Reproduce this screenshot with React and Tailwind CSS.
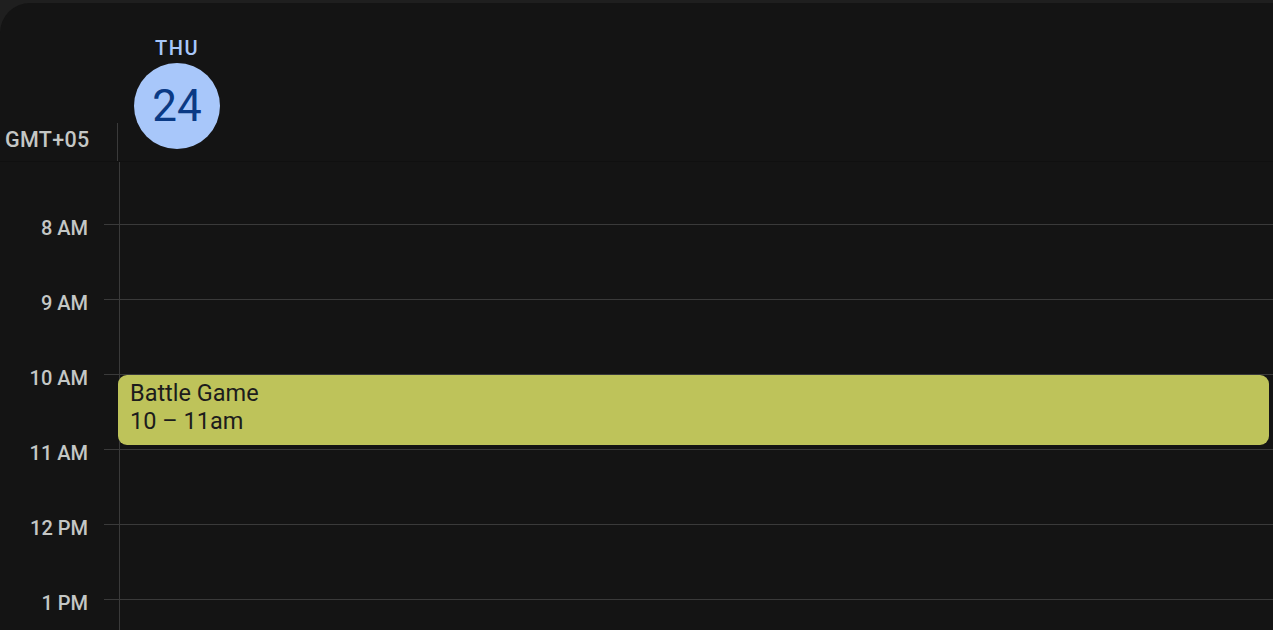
import React from 'react';

const hours = ['8 AM', '9 AM', '10 AM', '11 AM', '12 PM', '1 PM'];

function HourRow({ label, children }) {
  return (
    <div className="flex h-[75px] shrink-0">
      <div className="w-[104px] shrink-0 pr-4 text-right">
        <span className="block -mt-[10px] text-[20px] leading-[28px] font-medium text-[#c4c7c5]">{label}</span>
      </div>
      <div className="w-[15px] shrink-0 border-t border-[#3a3a3a]" />
      <div className="relative flex-1 border-t border-l border-[#3a3a3a]">{children}</div>
    </div>
  );
}

export default function App() {
  return (
    <div className="h-[630px] w-full overflow-hidden bg-[#1f1f1f] pt-[3px]" style={{ fontFamily: 'Roboto, "Noto Sans", sans-serif' }}>
      <div className="flex h-full flex-col rounded-tl-[30px] bg-[#141414]">
        {/* header */}
        <div className="flex h-[159px] shrink-0 border-b border-[#101010]">
          <div className="flex w-[117px] shrink-0 items-end">
            <span className="mb-[7px] pl-[5px] text-[21.5px] leading-[28px] font-medium tracking-[0.3px] text-[#c4c7c5]">GMT+05</span>
          </div>
          <div className="flex flex-1 items-end">
            <div className="h-[38px] w-px bg-[#3a3a3a]" />
            <div className="ml-4 flex w-[86px] flex-col items-center self-start pt-[32px]">
              <span className="text-[20px] leading-[26px] font-medium tracking-[1.5px] text-[#a8c7fa]">THU</span>
              <div className="mt-[2px] flex h-[86px] w-[86px] items-center justify-center rounded-full bg-[#a8c7fa]">
                <span className="text-[44px] leading-none text-[#0a3a85]">24</span>
              </div>
            </div>
          </div>
        </div>

        {/* grid */}
        <div className="flex flex-1 flex-col">
          <div className="flex h-[62px] shrink-0">
            <div className="w-[119px] shrink-0" />
            <div className="flex-1 border-l border-[#3a3a3a]" />
          </div>
          {hours.map((h) => (
            <HourRow key={h} label={h}>
              {h === '10 AM' && (
                <div className="absolute -left-[2px] right-[4px] top-0 h-[70px] rounded-[9px] bg-[#bec35a] px-3 pt-[4px] text-[#1c1c1c]">
                  <div className="text-[23.5px] leading-[28px]">Battle Game</div>
                  <div className="text-[23.5px] leading-[28px]">10 – 11am</div>
                </div>
              )}
            </HourRow>
          ))}
        </div>
      </div>
    </div>
  );
}
